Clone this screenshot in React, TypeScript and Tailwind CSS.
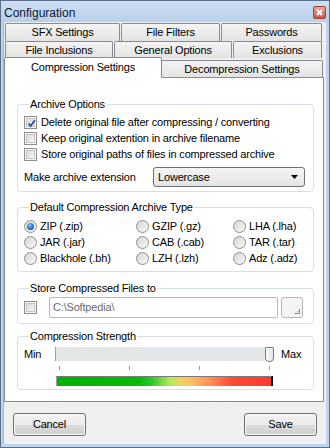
import React from "react";

const tabCls =
  "flex items-center justify-center border border-b-0 border-[#898c95] rounded-t-[2px] bg-[linear-gradient(to_bottom,#f4f4f4,#e3e3e3)] text-[11px] leading-none text-black";

function CheckBox({ checked = false }: { checked?: boolean }) {
  return (
    <div className="w-[13px] h-[13px] border border-[#8f8f8f] bg-[#f4f4f4] p-[1px] shrink-0">
      <div className="w-full h-full border border-[#c6c6c6] bg-[linear-gradient(135deg,#dcdcdc,#f6f6f6)] relative">
        {checked && (
          <svg viewBox="0 0 9 9" className="absolute inset-0 w-[9px] h-[9px]">
            <path d="M1.5 4.5 L3.6 7 L7.8 1.2" fill="none" stroke="#2b4fa8" strokeWidth="1.8" />
          </svg>
        )}
      </div>
    </div>
  );
}

function Radio({ checked = false }: { checked?: boolean }) {
  return (
    <div className="w-[13px] h-[13px] rounded-full border border-[#8f8f8f] bg-[linear-gradient(135deg,#d6d6d6,#f8f8f8)] flex items-center justify-center shrink-0">
      {checked && (
        <div className="w-[7px] h-[7px] rounded-full bg-[radial-gradient(circle_at_40%_35%,#8cc6ff,#1f6fd0_55%,#0d3f8a)]" />
      )}
    </div>
  );
}

function CheckRow({ label, checked }: { label: string; checked?: boolean }) {
  return (
    <div className="h-[16px] flex items-center gap-[4px]">
      <CheckBox checked={checked} />
      <span className="text-[11px] leading-none">{label}</span>
    </div>
  );
}

function RadioItem({ label, checked }: { label: string; checked?: boolean }) {
  return (
    <div className="h-[16px] flex items-center gap-[3px]">
      <Radio checked={checked} />
      <span className="text-[11px] leading-none">{label}</span>
    </div>
  );
}

function Group({
  title,
  className,
  children,
}: {
  title: string;
  className?: string;
  children: React.ReactNode;
}) {
  return (
    <fieldset className={"border border-[#d5dfe5] rounded-[4px] px-[6px] " + (className ?? "")}>
      <legend className="ml-[5px] px-[1px] text-[11px] leading-[14px] h-[14px] bg-white">{title}</legend>
      {children}
    </fieldset>
  );
}

function Button({ label }: { label: string }) {
  return (
    <div className="w-[73px] h-[23px] rounded-[3px] border border-[#707070] p-[1px] bg-[#f6f6f6]">
      <div className="w-full h-full rounded-[2px] bg-[linear-gradient(to_bottom,#f2f2f2_0%,#ebebeb_50%,#dddddd_50%,#cfcfcf_100%)] flex items-center justify-center text-[11px] leading-none">
        {label}
      </div>
    </div>
  );
}

export default function App() {
  return (
    <div className="w-[330px] h-[448px] bg-[#bfd3ec] border border-[#5b6f89] flex flex-col font-['Liberation_Sans',Arial,sans-serif] tracking-[-0.18px] text-black overflow-hidden">
      {/* Title bar */}
      <div className="h-[21px] flex items-center justify-between pl-[3px] pr-[3px] bg-[linear-gradient(to_bottom,#cddff3,#b9cfea)]">
        <span className="text-[12px] tracking-normal leading-none text-[#0c1a33] mt-[2px]">Configuration</span>
        <div className="w-[13px] h-[13px] mt-[2px] rounded-[2px] border border-[#a24238] bg-[linear-gradient(to_bottom,#e8a99a,#c8574a)] flex items-center justify-center">
          <svg viewBox="0 0 9 9" className="w-[9px] h-[9px]">
            <path d="M2 2 L7 7 M7 2 L2 7" stroke="#ffffff" strokeWidth="1.8" />
          </svg>
        </div>
      </div>

      {/* Body */}
      <div className="ml-[2px] mr-[3px] h-[422px] bg-[#f0f0f0] border-l border-[#9fb3cc] flex flex-col">
        {/* Tab row 1 */}
        <div className="mt-[1px] ml-[1px] flex gap-[1px] h-[18px]">
          <div className={tabCls + " w-[115px]"}>SFX Settings</div>
          <div className={tabCls + " w-[99px]"}>File Filters</div>
          <div className={tabCls + " w-[101px]"}>Passwords</div>
        </div>
        {/* Tab row 2 */}
        <div className="ml-[1px] flex gap-[1px] h-[17px]">
          <div className={tabCls + " w-[108px]"}>File Inclusions</div>
          <div className={tabCls + " w-[118px]"}>General Options</div>
          <div className={tabCls + " w-[89px]"}>Exclusions</div>
        </div>
        {/* Tab row 3 */}
        <div className="-mt-[1px] flex h-[20px] items-start">
          <div className="relative z-10 w-[158px] h-[21px] border border-b-0 border-[#898c95] rounded-t-[2px] bg-white flex items-center justify-center text-[11px] leading-none pb-[2px]">
            Compression Settings
          </div>
          <div className={tabCls + " mt-[3px] w-[162px] h-[17px] -ml-[1px]"}>Decompression Settings</div>
        </div>

        {/* Panel */}
        <div className="w-[320px] h-[325px] border border-[#898c95] bg-white pt-[19px] pl-[12px] pr-[9px] flex flex-col">
          <Group title="Archive Options" className="pt-[3px] pb-[4px]">
            <CheckRow label="Delete original file after compressing / converting" checked />
            <CheckRow label="Keep original extention in archive filename" />
            <CheckRow label="Store original paths of files in compressed archive" />
            <div className="mt-[5px] h-[20px] flex items-center">
              <span className="text-[11px] leading-none w-[129px]">Make archive extension</span>
              <div className="w-[152px] h-[20px] rounded-[3px] border border-[#707070] bg-[linear-gradient(to_bottom,#f4f4f4,#e4e4e4)] flex items-center justify-between pl-[4px] pr-[6px]">
                <span className="text-[11px] leading-none">Lowercase</span>
                <svg viewBox="0 0 7 4" className="w-[7px] h-[4px]">
                  <path d="M0 0 H7 L3.5 4 Z" fill="#000" />
                </svg>
              </div>
            </div>
          </Group>

          <Group title="Default Compression Archive Type" className="mt-[8px] pt-[4px] pb-[5px]">
            <div className="grid grid-cols-[112px_97px_1fr]">
              <RadioItem label="ZIP (.zip)" checked />
              <RadioItem label="GZIP (.gz)" />
              <RadioItem label="LHA (.lha)" />
              <RadioItem label="JAR (.jar)" />
              <RadioItem label="CAB (.cab)" />
              <RadioItem label="TAR (.tar)" />
              <RadioItem label="Blackhole (.bh)" />
              <RadioItem label="LZH (.lzh)" />
              <RadioItem label="Adz (.adz)" />
            </div>
          </Group>

          <Group title="Store Compressed Files to" className="mt-[9px] pt-[2px] pb-[5px]">
            <div className="h-[21px] flex items-center">
              <CheckBox />
              <div className="ml-[12px] w-[229px] h-[21px] border border-[#b7b9bd] rounded-[2px] bg-white flex items-center pl-[3px]">
                <span className="text-[11px] leading-none text-[#6d6d6d]">C:\Softpedia\</span>
              </div>
              <div className="ml-[3px] w-[22px] h-[21px] border border-[#b5b5b5] rounded-[3px] bg-[#f4f4f4] relative">
                <svg viewBox="0 0 22 21" className="absolute inset-0 w-[22px] h-[21px]">
                  <path d="M12.5 15.5 H17.5 V11" fill="none" stroke="#8a8a8a" strokeWidth="1" />
                  <path d="M15.5 13.5 H16.5" stroke="#8a8a8a" strokeWidth="1" />
                </svg>
              </div>
            </div>
          </Group>

          <Group title="Compression Strength" className="mt-[5px] pt-[4px] pb-[3px]">
            <div className="h-[14px] flex items-center">
              <span className="text-[11px] leading-none w-[31px]">Min</span>
              <div className="w-[219px] h-[14px] bg-[#e4e7e8] border-l border-[#9aa0a4] relative">
                <div className="absolute right-0 top-0 w-[9px] h-[15px] border border-[#7d7d7d] rounded-b-[4px] rounded-t-[1px] bg-[linear-gradient(to_right,#ffffff,#e2e2e2)]" />
              </div>
              <span className="ml-[7px] text-[11px] leading-none">Max</span>
            </div>
            <div className="h-[4px] mt-[5px] ml-[35px] w-[211px] flex justify-between">
              <div className="w-[1px] h-[4px] bg-[#9a9a9a]" />
              <div className="w-[1px] h-[4px] bg-[#9a9a9a]" />
              <div className="w-[1px] h-[4px] bg-[#9a9a9a]" />
              <div className="w-[1px] h-[4px] bg-[#9a9a9a]" />
            </div>
            <div className="mt-[6px] ml-[32px] w-[217px] h-[10px] border-t border-[#7a7a7a] border-l border-l-[#a0a0a0] border-r-2 border-r-black bg-[linear-gradient(to_right,#00b300_0%,#08b908_38%,#28c828_44%,#b4ea5a_53%,#f0d060_58%,#ffbe66_63%,#ff8a55_72%,#ff4a36_82%,#ff3a30_100%)]" />
          </Group>
        </div>

        {/* Buttons */}
        <div className="mt-[11px] px-[9px] flex justify-between">
          <Button label="Cancel" />
          <Button label="Save" />
        </div>
      </div>
    </div>
  );
}
